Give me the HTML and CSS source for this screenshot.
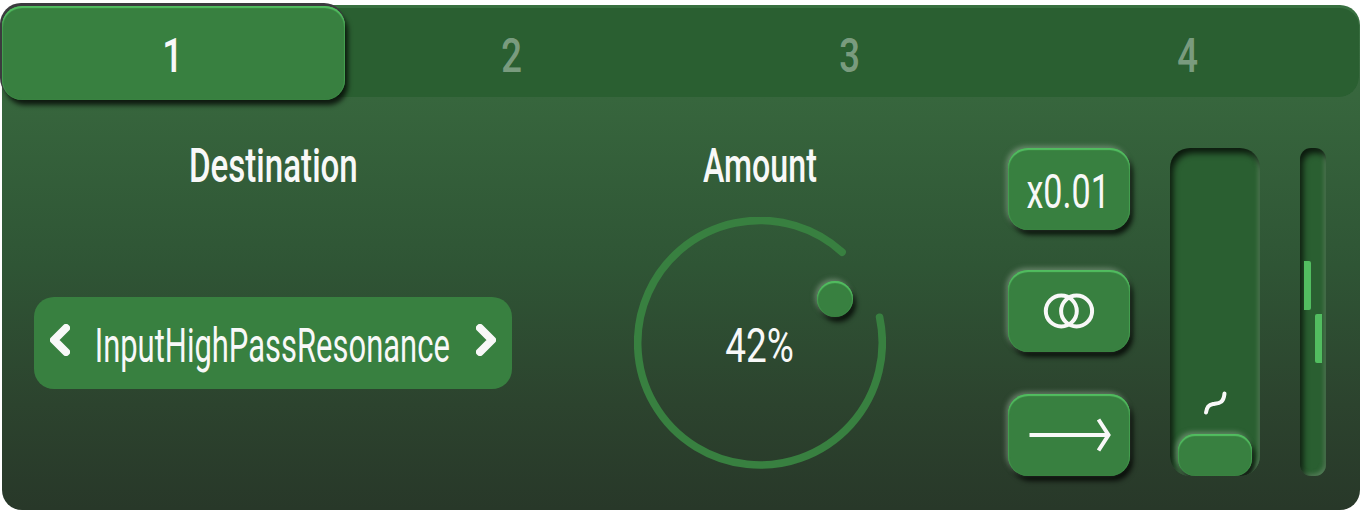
FILE: index.html
```html
<!DOCTYPE html>
<html lang="en">
<head>
    <meta charset="UTF-8">
    <meta name="viewport" content="width=device-width, initial-scale=1.0">
    <title>Modulation</title>
    <link rel="stylesheet" href="styles.css">
</head>
<body>
    <div class="panel">
        <!-- Tabs -->
        <div class="tabs">
            <div class="tab active"><span class="text digit">1</span></div>
            <div class="tab"><span class="text digit">2</span></div>
            <div class="tab"><span class="text digit">3</span></div>
            <div class="tab"><span class="text digit">4</span></div>
        </div>

        <div class="content">
            <!-- Destination -->
            <div class="destination">
                <div class="label"><span class="text destination-label">Destination</span></div>
                <div class="select">
                    <svg class="chevron" width="20" height="32" viewBox="0 0 20 32">
                        <path d="M16 4L4 16L16 28"/>
                    </svg>
                    <div class="select-value"><span class="text destination-name">InputHighPassResonance</span></div>
                    <svg class="chevron" width="20" height="32" viewBox="0 0 20 32">
                        <path d="M4 4L16 16L4 28"/>
                    </svg>
                </div>
            </div>

            <!-- Amount -->
            <div class="amount">
                <div class="label"><span class="text amount-label">Amount</span></div>
                <div class="knob">
                    <svg width="252" height="252" viewBox="0 0 252 252">
                        <path class="arc" d="M208.1 35.1A122.3 122.3 0 1 0 245.6 100.3"/>
                    </svg>
                    <div class="knob-dot"></div>
                    <div class="knob-value"><span class="text percent">42%</span></div>
                </div>
            </div>

            <!-- Mode buttons -->
            <div class="buttons">
                <div class="button"><span class="text multiplier">x0.01</span></div>
                <div class="button">
                    <svg width="52" height="36" viewBox="0 0 52 36">
                        <circle cx="18.3" cy="18" r="15.5"/>
                        <circle cx="33.6" cy="18" r="15.5"/>
                    </svg>
                </div>
                <div class="button">
                    <svg width="84" height="36" viewBox="0 0 84 36">
                        <path d="M2.5 18H82M71.5 2.5L81.5 18L71.5 33.5"/>
                    </svg>
                </div>
            </div>

            <!-- Smoothing -->
            <div class="slider">
                <svg class="wave" width="24" height="24" viewBox="0 0 24 24">
                    <path d="M3 21.5C4 16 5.5 13.8 10 13C16 12 20.5 12.5 21.5 2.5"/>
                </svg>
                <div class="thumb"></div>
            </div>

            <div class="meter">
                <div class="level left"></div>
                <div class="level right"></div>
            </div>
        </div>
    </div>
</body>
</html>
```
FILE: styles.css
```css
:root {
    --green: #388040;
    --green-dark: #2a5f31;
    --green-light: #52bd60;
    --text: #f8f8f8;
    --bevel: inset 0 2px 1px var(--green-light), inset 0 1px 1px 1px rgba(82, 189, 96, 0.5);
    --glow: -2px -2px 5px rgba(160, 180, 160, 0.5);
    --drop: 3px 5px 5px rgba(0, 0, 0, 0.75);
}

* {
    margin: 0;
    padding: 0;
    box-sizing: border-box;
}

body {
    width: 1364px;
    height: 512px;
    padding: 5px 4px 2px 2px;
    background: #fff;
    font-family: Roboto, sans-serif;
    font-size: 48px;
    line-height: 1;
    color: var(--text);
    overflow: hidden;
}

svg {
    display: block;
    fill: none;
    stroke: var(--text);
}

.panel {
    height: 505px;
    padding: 1px 1px 0 0;
    border-radius: 20px;
    background: linear-gradient(#387040 0px, #37663d 92px, #2f5535 260px, #2c432e 400px, #283829 504px);
}

/* Condensed lettering */
.text {
    display: block;
    flex: none;
    white-space: nowrap;
}

.digit {
    transform: scaleX(0.76);
    font-weight: 500;
}

.destination-label {
    transform: scaleX(0.69);
    font-weight: 500;
}

.amount-label {
    transform: scaleX(0.67);
    font-weight: 500;
}

.destination-name {
    transform: scaleX(0.645);
    font-weight: 400;
}

.percent {
    transform: scaleX(0.77);
    font-weight: 400;
}

.multiplier {
    transform: scaleX(0.71);
    font-weight: 400;
}

.tabs {
    display: grid;
    grid-template-columns: 343px repeat(3, 338px);
    height: 91px;
    border-top: 2px solid transparent;
    border-radius: 20px;
    background: var(--green-dark) padding-box;
}

.tab {
    display: flex;
    align-items: center;
    justify-content: center;
    padding: 3px 4px 0 0;
    color: rgba(255, 255, 255, 0.4);
}

.tab.active {
    height: 94px;
    margin-top: -2px;
    padding: 5px 1px 0 0;
    border-radius: 20px;
    background: var(--green);
    color: var(--text);
    box-shadow: var(--bevel), -1px -2px 0 1px #3b3b3e, var(--drop);
}

.content {
    display: flex;
    padding: 51px 0 0 32px;
}

.label {
    display: flex;
    align-items: center;
    justify-content: center;
    height: 35px;
}

.destination {
    width: 478px;
    margin-right: 122px;
}

.select {
    display: flex;
    align-items: center;
    justify-content: space-between;
    height: 92px;
    margin-top: 114px;
    padding: 0 16px;
    border-radius: 20px;
    background: var(--green);
}

.select-value {
    display: flex;
    justify-content: center;
    width: 360px;
    padding: 5px 2px 0 0;
}

.chevron {
    margin-bottom: 6px;
    stroke-width: 8;
    stroke-linecap: round;
    stroke-linejoin: round;
}

.amount {
    width: 252px;
    margin-right: 122px;
}

.knob {
    position: relative;
    height: 252px;
    margin-top: 34px;
}

.arc {
    stroke: var(--green);
    stroke-width: 7.6;
    stroke-linecap: round;
}

.knob-dot {
    position: absolute;
    left: 183px;
    top: 64px;
    width: 36px;
    height: 36px;
    border-radius: 50%;
    background: var(--green);
    box-shadow: var(--bevel), var(--glow), var(--drop);
}

.knob-value {
    position: absolute;
    inset: 5px 0 0;
    display: flex;
    align-items: center;
    justify-content: center;
}

.buttons {
    display: flex;
    flex-direction: column;
    gap: 40px;
    width: 122px;
    height: 328px;
    margin-right: 40px;
}

.button {
    display: flex;
    align-items: center;
    justify-content: center;
    height: 82px;
    border-radius: 20px;
    background: var(--green);
    box-shadow: var(--bevel), var(--glow), var(--drop);
    stroke-width: 4;
}

.button:last-child {
    margin-top: 2px;
}

.multiplier {
    padding: 5px 3px 0 0;
}

.slider,
.meter {
    height: 328px;
    background: var(--green-dark);
    box-shadow: inset 3px 5px 6px rgba(0, 0, 0, 0.75), inset -2px -2px 4px rgba(130, 160, 130, 0.5);
}

.slider {
    display: flex;
    flex-direction: column;
    align-items: center;
    justify-content: flex-end;
    width: 90px;
    margin-right: 40px;
    border-radius: 20px;
    overflow: hidden;
}

.wave {
    margin-bottom: 19px;
    stroke-width: 4;
    stroke-linecap: round;
}

.thumb {
    width: 74px;
    height: 42px;
    border-radius: 17px;
    background: var(--green);
    box-shadow: var(--bevel), var(--glow), var(--drop);
}

.meter {
    display: flex;
    justify-content: space-between;
    width: 26px;
    padding: 113px 4px 0;
    border-radius: 11px;
}

.level {
    width: 7px;
    height: 49px;
    background: var(--green-light);
}

.level.left {
    border-radius: 0 2px 2px 0;
}

.level.right {
    margin-top: 53px;
    border-radius: 2px 0 0 2px;
}
```
